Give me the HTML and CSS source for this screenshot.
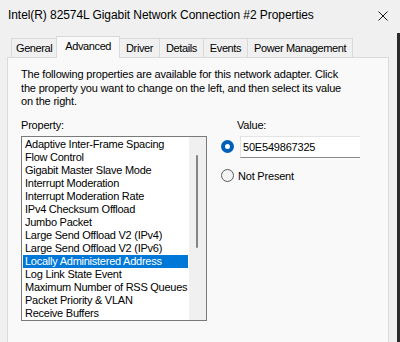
FILE: index.html
```html
<!DOCTYPE html>
<html lang="en">
<head>
  <meta charset="UTF-8">
  <meta name="viewport" content="width=device-width, initial-scale=1.0">
  <title>Network Connection Properties</title>
  <link rel="stylesheet" href="styles.css">
</head>
<body>

  <div class="window">
    <div class="dialog">
      <!-- Title bar -->
      <div class="titlebar">
        <span class="title">Intel(R) 82574L Gigabit Network Connection #2 Properties</span>
        <svg class="close" width="10" height="10" viewBox="0 0 10 10">
          <path d="M0.5 0.5 L9.5 9.5 M9.5 0.5 L0.5 9.5" stroke="#1a1a1a" stroke-width="1" fill="none"/>
        </svg>
      </div>

      <!-- Tabs -->
      <div class="tabs">
        <div class="tab">General</div>
        <div class="tab active">Advanced</div>
        <div class="tab">Driver</div>
        <div class="tab">Details</div>
        <div class="tab">Events</div>
        <div class="tab">Power Management</div>
      </div>

      <!-- Advanced page -->
      <div class="panel">
        <p class="intro">The following properties are available for this network adapter. Click the property you want to change on the left, and then select its value on the right.</p>

        <div class="settings">
          <div class="property-col">
            <div class="label">Property:</div>
            <div class="listbox">
              <ul class="items">
                <li>Adaptive Inter-Frame Spacing</li>
                <li>Flow Control</li>
                <li>Gigabit Master Slave Mode</li>
                <li>Interrupt Moderation</li>
                <li>Interrupt Moderation Rate</li>
                <li>IPv4 Checksum Offload</li>
                <li>Jumbo Packet</li>
                <li>Large Send Offload V2 (IPv4)</li>
                <li>Large Send Offload V2 (IPv6)</li>
                <li class="selected">Locally Administered Address</li>
                <li>Log Link State Event</li>
                <li>Maximum Number of RSS Queues</li>
                <li>Packet Priority &amp; VLAN</li>
                <li>Receive Buffers</li>
              </ul>
              <div class="scrollbar"><div class="thumb"></div></div>
            </div>
          </div>

          <div class="value-col">
            <div class="label value-label">Value:</div>
            <div class="option">
              <span class="radio checked"></span>
              <div class="textbox">50E549867325</div>
            </div>
            <div class="option option-none">
              <span class="radio"></span>
              <span>Not Present</span>
            </div>
          </div>
        </div>
      </div>
    </div>
    <div class="edge"></div>
  </div>

</body>
</html>
```

FILE: styles.css
```css
/* Global Styles */
body {
  margin: 0;
  padding: 0;
  font-family: "Liberation Sans", Arial, sans-serif;
  font-size: 11px;
  color: #000;
  background-color: #f0f0f0;
  overflow: hidden;
}

.window {
  width: 400px;
  height: 342px;
  display: flex;
}

.dialog {
  width: 397px;
  display: flex;
  flex-direction: column;
}

.edge {
  width: 3px;
  margin-top: 33px;
  background-color: #2b2b2b;
}

/* Title bar */
.titlebar {
  height: 30px;
  padding: 0 8px 0 8px;
  display: flex;
  align-items: center;
  justify-content: space-between;
}

.title {
  font-size: 12px;
  letter-spacing: -0.07px;
}

.close {
  margin-top: 1px;
  margin-right: 1px;
}

/* Tabs */
.tabs {
  height: 27px;
  padding-left: 11px;
  display: flex;
  align-items: flex-end;
}

.tab {
  height: 19px;
  line-height: 18px;
  padding: 0 6px;
  margin-left: -1px;
  border: 1px solid #d9d9d9;
  border-bottom: none;
  box-sizing: border-box;
  background-color: #f0f0f0;
  letter-spacing: -0.4px;
  white-space: nowrap;
}

.tab:first-child {
  margin-left: 0;
  padding: 0 4px;
}

.tab.active {
  position: relative;
  z-index: 1;
  height: 22px;
  line-height: 19px;
  margin-bottom: -1px;
  padding: 0 8px;
  background-color: #f9f9f9;
}

/* Page */
.panel {
  flex: 1;
  margin-left: 7px;
  width: 382px;
  box-sizing: border-box;
  padding: 10px 0 0 13px;
  border: 1px solid #dadada;
  border-bottom: none;
  background-color: #f9f9f9;
}

.intro {
  margin: 0;
  width: 328px;
  line-height: 13.5px;
  letter-spacing: -0.18px;
}

.settings {
  margin-top: 9px;
  display: flex;
}

.label {
  height: 14px;
  line-height: 14px;
  margin-bottom: 4px;
  letter-spacing: -0.2px;
}

/* Property list */
.listbox {
  width: 186px;
  height: 185px;
  box-sizing: border-box;
  border: 1px solid #7a7a7a;
  background-color: #fff;
  padding: 1px 0 0 1px;
  display: flex;
  gap: 1px;
  overflow: hidden;
}

.items {
  list-style: none;
  margin: 0;
  padding: 0;
  flex: 1;
}

.items li {
  height: 13px;
  line-height: 13px;
  padding-left: 2px;
  letter-spacing: -0.25px;
  white-space: nowrap;
}

.items li.selected {
  background-color: #0078d7;
  color: #fff;
}

.scrollbar {
  width: 17px;
  margin-top: -1px;
  background-color: #f0f0f0;
}

.thumb {
  width: 2px;
  height: 93px;
  margin: 18px 0 0 7px;
  border-radius: 1px;
  background-color: #858585;
}

/* Value column */
.value-col {
  margin-left: 14px;
}

.value-label {
  margin-left: 16px;
}

.option {
  display: flex;
  align-items: center;
  gap: 5px;
}

.option-none {
  margin-top: 11px;
  height: 14px;
  gap: 4px;
  letter-spacing: -0.2px;
}

.radio {
  width: 13px;
  height: 13px;
  box-sizing: border-box;
  border-radius: 50%;
  border: 1px solid #5a5a5a;
  background-color: #f3f3f3;
  display: flex;
  align-items: center;
  justify-content: center;
}

.radio.checked {
  border: none;
  background-color: #005fb8;
}

.radio.checked::after {
  content: "";
  width: 5px;
  height: 5px;
  border-radius: 50%;
  background-color: #fff;
}

.textbox {
  width: 120px;
  height: 22px;
  box-sizing: border-box;
  margin-left: 1px;
  padding-left: 2px;
  line-height: 20px;
  border: 1px solid #e3e3e3;
  border-bottom-color: #8a8a8a;
  border-right: none;
  background-color: #fff;
  letter-spacing: -0.2px;
}
```
